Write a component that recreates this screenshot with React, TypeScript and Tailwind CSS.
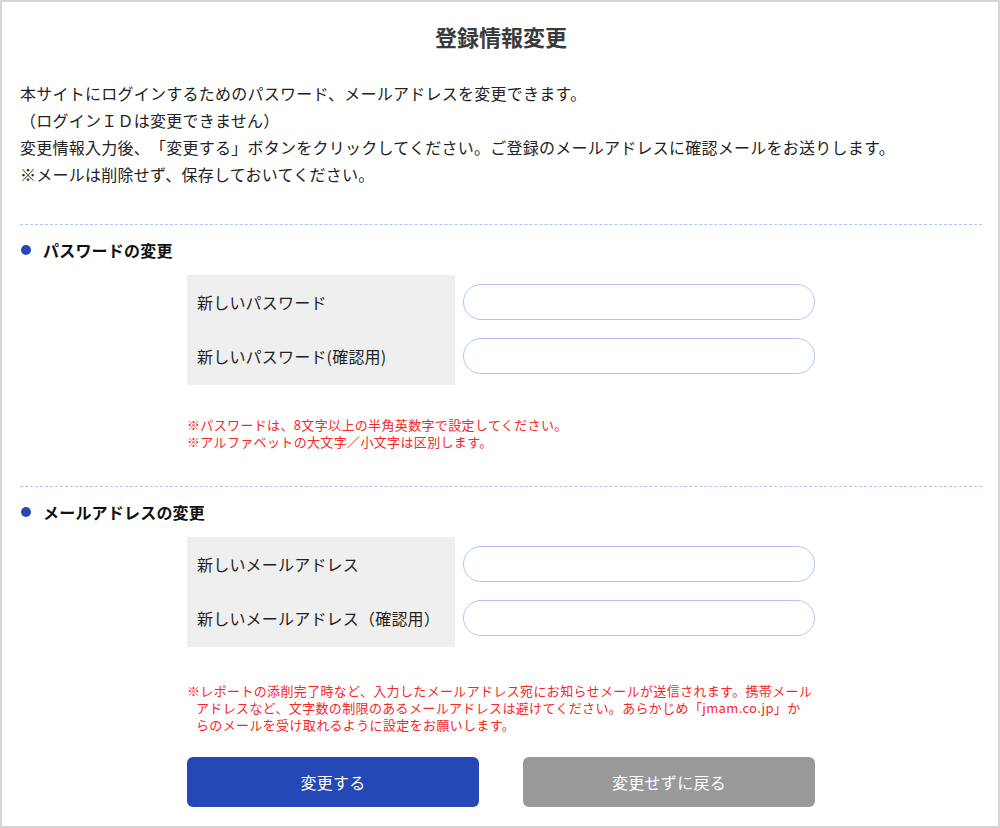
import React from "react";

const font = { fontFamily: '"Noto Sans CJK JP", "Noto Sans", sans-serif' };

function Heading({ children }: { children: React.ReactNode }) {
  return (
    <div className="flex items-center h-[24px] mt-[13px]">
      <span className="w-[10px] h-[10px] rounded-full bg-[#2548b6] ml-[1px] mr-[12px]" />
      <span className="text-[16px] font-bold text-[#111] leading-[24px] tracking-[0.2px]">{children}</span>
    </div>
  );
}

function FieldBox({ labels }: { labels: string[] }) {
  return (
    <div className="flex w-[628px] mx-auto mt-[13px]">
      <div className="w-[268px] bg-[#efefef] pt-[9px] pb-[11px] flex flex-col gap-[18px]">
        {labels.map((l) => (
          <div key={l} className="h-[36px] flex items-center px-[10px] text-[16px] text-[#222] tracking-[0.2px]">
            {l}
          </div>
        ))}
      </div>
      <div className="ml-[8px] pt-[9px] flex flex-col gap-[18px]">
        {labels.map((l) => (
          <input
            key={l}
            type="text"
            className="w-[352px] h-[36px] rounded-full border border-[#b4c3f3] bg-white px-4 outline-none"
          />
        ))}
      </div>
    </div>
  );
}

function Divider() {
  return <div className="border-t border-dashed border-[#b3c2f0] mt-[36px]" />;
}

export default function App() {
  return (
    <div
      style={font}
      className="w-[1000px] h-[828px] border-2 border-[#d6d6d6] bg-white box-border [text-spacing-trim:space-all]"
    >
      <div className="pl-[18px] pr-[16px]">
        <h1 className="text-center text-[22px] font-bold text-[#3a3a3a] leading-[30px] mt-[19px]">
          登録情報変更
        </h1>

        <div className="mt-[29px] text-[16px] leading-[27px] text-[#222] tracking-[0.25px]">
          <p>本サイトにログインするためのパスワード、メールアドレスを変更できます。</p>
          <p>（ログインＩＤは変更できません）</p>
          <p>変更情報入力後、「変更する」ボタンをクリックしてください。ご登録のメールアドレスに確認メールをお送りします。</p>
          <p>※メールは削除せず、保存しておいてください。</p>
        </div>

        <Divider />
        <Heading>パスワードの変更</Heading>
        <FieldBox labels={["新しいパスワード", "新しいパスワード(確認用)"]} />
        <div className="w-[628px] mx-auto mt-[31px] text-[13px] leading-[17px] text-[#f52727] tracking-[0.35px]">
          <p>※パスワードは、8文字以上の半角英数字で設定してください。</p>
          <p>※アルファベットの大文字／小文字は区別します。</p>
        </div>

        <Divider />
        <Heading>メールアドレスの変更</Heading>
        <FieldBox labels={["新しいメールアドレス", "新しいメールアドレス（確認用）"]} />
        <div className="w-[628px] mx-auto mt-[35px] text-[13px] leading-[17px] text-[#f52727] tracking-[0.35px]">
          <p>※レポートの添削完了時など、入力したメールアドレス宛にお知らせメールが送信されます。携帯メール</p>
          <p className="pl-[9px]">アドレスなど、文字数の制限のあるメールアドレスは避けてください。あらかじめ「jmam.co.jp」か</p>
          <p className="pl-[9px]">らのメールを受け取れるように設定をお願いします。</p>
        </div>

        <div className="w-[628px] mx-auto mt-[24px] flex justify-between">
          <button className="w-[292px] h-[50px] rounded-[6px] bg-[#2548b6] text-white text-[16px] tracking-[0.3px]">
            変更する
          </button>
          <button className="w-[292px] h-[50px] rounded-[6px] bg-[#999999] text-white text-[16px] tracking-[0.3px]">
            変更せずに戻る
          </button>
        </div>
      </div>
    </div>
  );
}
